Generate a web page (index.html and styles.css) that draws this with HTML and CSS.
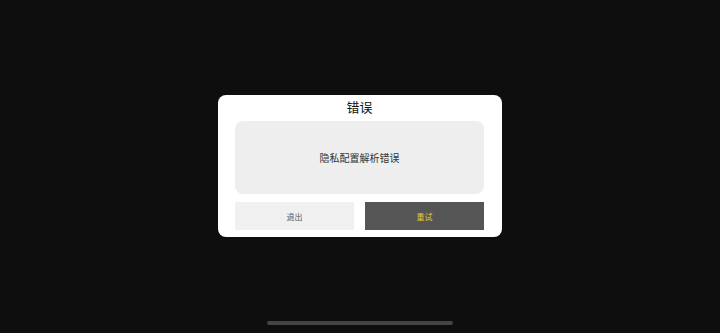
FILE: index.html
```html
<!DOCTYPE html>
<html lang="zh-CN">
<head>
    <meta charset="UTF-8">
    <meta name="viewport" content="width=device-width, initial-scale=1.0">
    <title>错误</title>
    <link rel="stylesheet" href="styles.css">
</head>
<body>
    <div class="screen">
        <div class="dialog">
            <div class="dialog-title">错误</div>
            <div class="dialog-message">隐私配置解析错误</div>
            <div class="dialog-actions">
                <button class="btn btn-exit">退出</button>
                <button class="btn btn-retry">重试</button>
            </div>
        </div>
        <div class="home-indicator"></div>
    </div>
</body>
</html>
```

FILE: styles.css
```css
body {
    margin: 0;
    background: #0e0e0e;
    font-family: "Noto Sans CJK SC", "Noto Sans", sans-serif;
}

.screen {
    position: relative;
    width: 720px;
    height: 333px;
    display: flex;
    justify-content: center;
    align-items: flex-start;
}

.dialog {
    margin-top: 95px;
    width: 284px;
    box-sizing: border-box;
    padding: 0 18px 7px 17px;
    background: #ffffff;
    border-radius: 8px;
}

.dialog-title {
    height: 26px;
    line-height: 24px;
    text-align: center;
    font-size: 13px;
    color: #111;
}

.dialog-message {
    height: 73px;
    display: flex;
    align-items: center;
    justify-content: center;
    background: #eeeeee;
    border-radius: 8px;
    font-size: 10px;
    color: #333;
}

.dialog-actions {
    display: flex;
    gap: 11px;
    margin-top: 8px;
}

.btn {
    flex: 1;
    height: 28px;
    border: none;
    padding: 0;
    font-family: inherit;
    font-size: 8px;
}

.btn-exit {
    background: #f0f0f0;
    color: #555;
}

.btn-retry {
    background: #555555;
    color: #e3c83a;
}

.home-indicator {
    position: absolute;
    left: 267px;
    top: 321px;
    width: 186px;
    height: 4px;
    border-radius: 2px;
    background: #444444;
}
```
